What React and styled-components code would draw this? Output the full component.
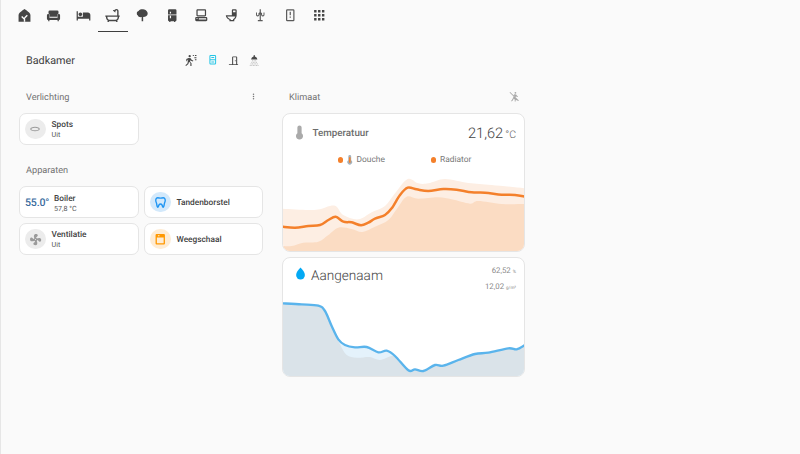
import React from 'react';
import styled, { createGlobalStyle } from 'styled-components';

const GlobalStyle = createGlobalStyle`
  html, body {
    margin: 0;
    height: 100%;
    background: #fafafa;
    overflow: hidden;
  }
  * { box-sizing: border-box; }
`;

const Page = styled.div`
  width: 800px;
  height: 454px;
  background: #fafafa;
  border-left: 1px solid #e6e6e6;
  font-family: Roboto, 'Liberation Sans', sans-serif;
  text-rendering: geometricPrecision;
  color: #3c3c3c;
  overflow: hidden;
`;

const TabBar = styled.nav`
  display: flex;
  height: 32px;
  padding-left: 8.5px;
`;

const Tab = styled.div`
  width: 29.5px;
  height: 32px;
  display: flex;
  align-items: center;
  justify-content: center;
  border-bottom: 1px solid ${(p) => (p.$active ? '#3f3f3f' : 'transparent')};
`;

const Icon = styled.svg`
  width: ${(p) => p.$size || 14}px;
  height: ${(p) => p.$size || 14}px;
  fill: ${(p) => p.$color || '#454545'};
  flex: none;
  display: block;
`;

const ViewHeader = styled.header`
  display: flex;
  align-items: center;
  height: 20px;
  margin-top: 18px;
  padding-left: 25px;
`;

const ViewTitle = styled.h1`
  width: 155px;
  margin: 0;
  font-size: 10.8px;
  font-weight: 400;
  color: #404040;
`;

const Badge = styled.div`
  width: 21px;
  display: flex;
  justify-content: center;
`;

const Columns = styled.div`
  display: grid;
  grid-template-columns: 244px 243px;
  column-gap: 19px;
  padding-left: 18px;
  margin-top: 16px;
`;

const Column = styled.section`
  display: flex;
  flex-direction: column;
`;

const SectionHead = styled.div`
  display: flex;
  align-items: center;
  justify-content: space-between;
  height: 20px;
  padding: 0 5px 0 7px;
  margin-top: ${(p) => p.$top || 0}px;
  margin-bottom: ${(p) => p.$bottom || 7}px;
`;

const SectionTitle = styled.h2`
  margin: 0;
  padding-top: 2px;
  font-size: 9.2px;
  font-weight: 400;
  color: #727272;
`;

const TileGrid = styled.div`
  display: grid;
  grid-template-columns: 120px 119px;
  gap: 5px;
`;

const Tile = styled.div`
  height: 32px;
  display: flex;
  align-items: center;
  gap: 6px;
  padding-left: 5px;
  background: #fff;
  border: 1px solid #e5e5e5;
  border-radius: 7px;
`;

const IconCircle = styled.div`
  width: 20.5px;
  height: 20.5px;
  border-radius: 50%;
  display: flex;
  align-items: center;
  justify-content: center;
  background: ${(p) => p.$bg || '#ececec'};
  flex: none;
`;

const TileText = styled.div`
  display: flex;
  flex-direction: column;
  gap: 1.5px;
  padding-top: ${(p) => p.$shift || 0}px;
`;

const TileName = styled.div`
  padding-top: 1px;
  font-size: 8.3px;
  line-height: 10px;
  font-weight: 500;
  color: #3f3f3f;
`;

const TileState = styled.div`
  font-size: 7.2px;
  line-height: 8.5px;
  color: #555;
`;

const BoilerValue = styled.div`
  font-size: 10.6px;
  font-weight: 500;
  letter-spacing: -0.2px;
  color: #3b6c9e;
  width: 23px;
`;

const ChartCard = styled.article`
  height: ${(p) => p.$height}px;
  margin-bottom: 5px;
  background: #fff;
  border: 1px solid #e5e5e5;
  border-radius: 8px;
  overflow: hidden;
  display: flex;
  flex-direction: column;
`;

const CardHead = styled.div`
  display: flex;
  align-items: ${(p) => p.$align || 'center'};
  padding: ${(p) => p.$padding};
  height: ${(p) => p.$height}px;
  flex: none;
`;

const CardName = styled.div`
  flex: 1;
  margin-left: 4.5px;
  padding-top: 2px;
  font-size: 9.8px;
  font-weight: 500;
  color: #6d6d6d;
`;

const BigValue = styled.div`
  font-size: 14.6px;
  font-weight: 300;
  color: #444;
`;

const BigUnit = styled.span`
  font-size: 10.5px;
  margin-left: 2px;
  color: #666;
`;

const Legend = styled.div`
  display: flex;
  align-items: center;
  height: 12px;
  margin-top: 3px;
  padding-left: 54.5px;
  font-size: 8.4px;
  color: #777;
`;

const LegendItem = styled.div`
  display: flex;
  align-items: center;
  gap: ${(p) => p.$gap}px;
  width: ${(p) => p.$width}px;
`;

const Dot = styled.span`
  width: 5.5px;
  height: 5.5px;
  border-radius: 50%;
  background: #f4802b;
`;

const Chart = styled.svg`
  display: block;
  width: 243px;
  height: ${(p) => p.$height}px;
  margin-top: auto;
  margin-bottom: -1px;
  margin-left: -1px;
  flex: none;
`;

const ComfortName = styled.div`
  flex: 1;
  margin-left: 3px;
  padding-top: 1px;
  font-size: 13.6px;
  font-weight: 300;
  line-height: 18px;
  color: #444;
`;

const Readings = styled.div`
  display: flex;
  flex-direction: column;
  align-items: flex-end;
  gap: 5px;
`;

const Reading = styled.div`
  font-size: 7.8px;
  line-height: 9px;
  color: #888;
`;

const ReadingUnit = styled.span`
  font-size: 4.5px;
  margin-left: 2px;
`;

const paths = {
  sofa: 'M6 4h12a2 2 0 0 1 2 2v2.6a3.2 3.2 0 0 0-2 3V14H6v-2.400a3.200 3.200 0 0 0-2-3V6a2 2 0 0 1 2-2M3.500 9.500a2 2 0 0 1 2 2V15.500h13V11.500a2 2 0 1 1 4 0V17a2 2 0 0 1-2 2v2h-2v-2H5.500v2h-2v-2a2 2 0 0 1-2-2v-5.500a2 2 0 0 1 2-2Z',
  bed: 'M19 7H11V14H3V5H1V20H3V17H21V20H23V11C23 8.790 21.210 7 19 7M7 13C8.660 13 10 11.660 10 10C10 8.340 8.660 7 7 7C5.340 7 4 8.340 4 10C4 11.660 5.340 13 7 13Z',
  bath: 'M19.500 12V4.800C19.500 4.100 19 3.700 18.400 3.700C18 3.700 17.800 3.800 17.500 4.100L16.600 5C16.900 5.700 16.800 6.500 16.300 7.200L12.600 3.800C13.300 3.200 14.200 3.100 14.900 3.400L15.900 2.500C16.500 1.900 17.300 1.500 18.300 1.500C20.200 1.500 21.700 3 21.700 4.800V12H23.500V14H22.500C22.500 17 21.500 19 19.500 20L20.200 22.500H18L17.500 21H6.500L6 22.500H3.800L4.500 20C2.500 19 1.500 17 1.500 14H.5V12H19.500M3.800 14C3.800 17 5 18.800 7 18.800H17C19 18.800 20.200 17 20.200 14H3.800Z',
  tree: 'M11 15C8 15.500 5 14.500 4.500 12C3.300 11 3 10 3 8.500C3 6.500 4.500 5.500 6 5C6.800 3 9 2 12 2C16 2 21 4.500 21 9C21 12.500 18 15 13.500 15V22H11V15Z',
  fridge: 'M7 2H17A2 2 0 0 1 19 4V20A2 2 0 0 1 17 22V23H15V22H9V23H7V22A2 2 0 0 1 5 20V4A2 2 0 0 1 7 2M8 6V9H10V6H8M8 13V17H10V13H8M5 10.800V11.800H19V10.800H5Z',
  desktop: 'M6 2C4.890 2 4 2.890 4 4V12C4 13.110 4.890 14 6 14H18C19.110 14 20 13.110 20 12V4C20 2.890 19.110 2 18 2H6M6 4H18V12H6V4M4 15C2.890 15 2 15.890 2 17V20C2 21.110 2.890 22 4 22H20C21.110 22 22 21.110 22 20V17C22 15.890 21.110 15 20 15H4M8 17H20V18H8V17M8 19H20V20H8V19M4 17H6V18H4V17Z',
  toilet: 'M9 22H17V19.500C19.410 17.870 21 15.120 21 12V4A2 2 0 0 0 19 2H15C13.890 2 13 2.890 13 4V12H3C3 15.090 5 18 9 19.500V22M5.290 14H18.710C18.140 15.910 16.770 17.500 15 18.330V20H11V18.330C8.400 17.500 6 16 5.290 14M15 4H19V7H15V4Z',
  rack: 'M11 2h2v5l2 1.500V11a1.200 1.200 0 0 0 2.400 0V7.500h1.600V11a2.800 2.800 0 0 1-5.600.300L13 10.500V20h3v2H8v-2h3v-9.500l-.4.800A2.800 2.800 0 0 1 5 11V7.500h1.600V11A1.200 1.200 0 0 0 9 11V8.500L11 7V2Z',
  panel: 'M7 2h10a2 2 0 0 1 2 2v16a2 2 0 0 1-2 2H7a2 2 0 0 1-2-2V4a2 2 0 0 1 2-2m0 2v16h10V4H7m4 2h2v6h-2V6m0 8h2v2h-2v-2Z',
  grid: 'M3.500 3.500h4v4h-4zM10 3.500h4v4h-4zM16.500 3.500h4v4h-4zM3.500 10h4v4h-4zM10 10h4v4h-4zM16.500 10h4v4h-4zM3.500 16.500h4v4h-4zM10 16.500h4v4h-4zM16.500 16.500h4v4h-4z',
  motion: 'M9 2a2.200 2.200 0 1 1 0 4.400A2.200 2.200 0 0 1 9 2M7 7.500l4 .500 2 3.500 3 1.200-.7 1.800-3.800-1.500-.9-1.300-.8 3 2.700 3V23h-2.200v-5.500L7.700 15l-1.200 4L2 23l-1.300-1.600 3.900-3.400 1.700-7.500-1.800.8V14H2.500V9.700L7 7.500M15 2h2v2h-2V2m4 0h3v2h-3V2m-1 4h4v2h-4V6m1 4h3v2h-3v-2Z',
  heater: 'M7.500 2h9A2.500 2.500 0 0 1 19 4.500v15a2.500 2.500 0 0 1-2.500 2.500h-9A2.500 2.500 0 0 1 5 19.500v-15A2.500 2.500 0 0 1 7.500 2m0 2.200a.400.400 0 0 0-.4.400V11h9.800V4.600a.400.400 0 0 0-.4-.4H7.500M7.100 13v6.400c0 .2.200.400.4.400h9c.2 0 .4-.2.400-.4V13H7.100M9 6.500h6v2H9v-2m0 9h6v2H9v-2Z',
  door: 'M2 20h7V5a2 2 0 0 1 2-2h7a2 2 0 0 1 2 2v15h2v2H2v-2m9.200-15v15h6.600V5h-6.600m3.800 6.500h1.700v2H15v-2Z',
  shower: 'M12 2a1.300 1.300 0 0 1 1.300 1.300v1.500C15.800 5.500 17.500 7.800 18 10.500H6C6.500 7.800 8.200 5.500 10.700 4.800V3.300A1.300 1.300 0 0 1 12 2Z',
  motionOff: 'M2.500 2 1.200 3.300 10 12l-1 2.500-3 5.500-1.500 1.500L6 23l2.500-3 2-3.500 2 2V23h2v-4l5.800 2.800 1.300-1.300L2.500 2M14 2a2 2 0 1 1 0 4 2 2 0 0 1 0-4m-2 5 3.500.500 2 3 2 1-.6 1.800-3-1.200-1.800 1.200L10 8.500 12 7Z',
  spot: 'M12 7.500c5.500 0 9.500 2 9.500 4.500s-4 4.500-9.500 4.500-9.500-2-9.500-4.500 4-4.500 9.500-4.500m0 1.800c-4.500 0-7.500 1.500-7.500 2.700s3 2.700 7.500 2.700 7.500-1.500 7.500-2.700-3-2.700-7.500-2.700Z',
  fan: 'M12 11a1 1 0 1 0 0 2 1 1 0 0 0 0-2m.5-9c4.500 0 4.600 3.600 2.200 4.800-1 .5-1.400 1.300-1.600 2 .6.300 1.100.700 1.500 1.300 3.700-2 7.900-1.200 7.900 2.400 0 4.500-3.700 4.600-4.900 2.200-.5-1-1.300-1.400-2-1.600-.3.600-.7 1.100-1.300 1.500 2 3.700 1.200 7.900-2.400 7.900-4.500 0-4.600-3.700-2.200-4.900 1-.5 1.400-1.300 1.600-2-.6-.3-1.100-.7-1.500-1.300-3.700 2-7.900 1.200-7.900-2.400 0-4.500 3.700-4.600 4.900-2.200.5 1 1.300 1.400 2 1.600.3-.6.700-1.100 1.300-1.500C8.100 6.600 8.900 2 12.500 2Z',
  tooth: 'M7 2c1.800 0 3 .8 5 .8S15.200 2 17 2c3 0 5 2.500 5 6 0 2.500-1 3.800-1.500 6-.5 2.500-.8 8-3.500 8-2.800 0-2.300-6-5-6s-2.200 6-5 6c-2.700 0-3-5.500-3.500-8C3 11.800 2 10.500 2 8c0-3.500 2-6 5-6m0 2.500C5.500 4.500 4.500 6 4.500 8c0 2 .9 3.200 1.500 5.600.3 1.300.5 3.500 1 5 .8-2 1.500-5.100 5-5.100s4.200 3.100 5 5.100c.5-1.500.7-3.700 1-5 .6-2.400 1.500-3.600 1.500-5.600 0-2-1-3.500-2.500-3.500-1.400 0-2.800.8-5 .8S8.400 4.500 7 4.500Z',
  scale: 'M5 2h14a2 2 0 0 1 2 2v16a2 2 0 0 1-2 2H5a2 2 0 0 1-2-2V4a2 2 0 0 1 2-2m.5 6.500V19.500h13V8.500h-13M7.500 4.500v1.500h3V4.500h-3Z',
  thermo: 'M15 13V5a3 3 0 0 0-6 0v8a5 5 0 1 0 6 0Z',
  drop: 'M12 2.500c4 4.500 7 8 7 12a7 7 0 0 1-14 0c0-4 3-7.500 7-12Z',
  dots: 'M12 16a2 2 0 1 1 0 4 2 2 0 0 1 0-4m0-6a2 2 0 1 1 0 4 2 2 0 0 1 0-4m0-6a2 2 0 1 1 0 4 2 2 0 0 1 0-4Z',
};

const Glyph = ({ name, size, color }) => (
  <Icon viewBox="0 0 24 24" $size={size} $color={color} fillRule="evenodd">
    <path d={paths[name]} />
  </Icon>
);

const HomeLeaf = () => (
  <Icon viewBox="0 0 24 24" $size={15}>
    <path d="M12 1.500 15 3.500C18 6 21.500 8.500 21.500 11V22H2.500V11C2.500 8.500 6 6 9 3.500L12 1.500Z" />
    <path d="M12 22V16M12 18 7.500 13.500M12 16 16.500 11.500" fill="none" stroke="#fafafa" strokeWidth="2.200" />
  </Icon>
);

const ShowerBadge = () => (
  <Icon viewBox="0 0 24 24" $size={12.500}>
    <path d={paths.shower} fill="#4a4a4a" />
    <path d="M8 13h8M6.500 16h11M5 19h14M3.500 22h17" fill="none" stroke="#a9a9a9" strokeWidth="1.600" strokeDasharray="1.600 1.400" />
  </Icon>
);

const LegendThermo = () => (
  <Icon viewBox="0 0 24 24" $size={11.500}>
    <path d={paths.thermo} fill="#a4b2bd" />
    <path d="M12 7v11" stroke="#f4802b" strokeWidth="3.500" fill="none" />
  </Icon>
);

const smooth = (pts) => {
  let d = `M${pts[0][0]} ${pts[0][1]}`;
  for (let i = 0; i < pts.length - 1; i++) {
    const p0 = pts[i - 1] || pts[i];
    const p1 = pts[i];
    const p2 = pts[i + 1];
    const p3 = pts[i + 2] || p2;
    const c1x = p1[0] + (p2[0] - p0[0]) / 6;
    const c1y = p1[1] + (p2[1] - p0[1]) / 6;
    const c2x = p2[0] - (p3[0] - p1[0]) / 6;
    const c2y = p2[1] - (p3[1] - p1[1]) / 6;
    d += ` C${c1x} ${c1y} ${c2x} ${c2y} ${p2[0]} ${p2[1]}`;
  }
  return d;
};

const area = (pts, bottom) =>
  `${smooth(pts)} L${pts[pts.length - 1][0]} ${bottom} L${pts[0][0]} ${bottom} Z`;

const tempLine = [[21, 440], [60, 443], [100, 438], [135, 435], [160, 420], [182, 410], [205, 425], [230, 427], [258, 436], [280, 428], [300, 416], [330, 405], [350, 385], [375, 345], [398, 323], [425, 328], [460, 333], [505, 327], [545, 329], [590, 337], [630, 338], [680, 344], [720, 345], [750, 350]];
const tempHigh = [[21, 386], [100, 390], [135, 388], [165, 378], [185, 380], [205, 405], [250, 418], [290, 397], [330, 378], [360, 340], [398, 297], [430, 310], [460, 310], [510, 297], [580, 309], [650, 315], [750, 325]];
const tempLow = [[21, 498], [50, 498], [85, 488], [130, 485], [160, 465], [190, 443], [230, 447], [262, 456], [300, 440], [340, 420], [370, 380], [395, 350], [430, 356], [490, 352], [530, 358], [585, 371], [610, 363], [680, 372], [750, 372]];

const humLine = [[21, 157], [80, 160], [130, 164], [150, 180], [170, 225], [190, 265], [210, 282], [240, 289], [275, 288], [310, 304], [335, 299], [360, 315], [400, 358], [420, 355], [445, 360], [480, 342], [505, 344], [550, 327], [600, 309], [640, 305], [700, 292], [725, 295], [750, 282]];
const humLow = [[21, 157], [80, 160], [130, 164], [150, 180], [170, 225], [195, 280], [215, 312], [245, 320], [285, 318], [315, 327], [350, 315], [365, 322], [400, 358], [420, 355], [445, 360], [480, 342], [505, 344], [550, 327], [600, 309], [640, 305], [700, 292], [725, 295], [750, 282]];

const tabs = ['sofa', 'bed', 'bath', 'tree', 'fridge', 'desktop', 'toilet', 'rack', 'panel', 'grid'];

export default function App() {
  return (
    <Page>
      <GlobalStyle />
      <TabBar>
        <Tab><HomeLeaf /></Tab>
        {tabs.map((t) => (
          <Tab key={t} $active={t === 'bath'}>
            <Glyph name={t} size={t === 'bed' || t === 'sofa' || t === 'bath' ? 15 : 14.500} color={t === 'rack' || t === 'panel' ? '#5a5a5a' : undefined} />
          </Tab>
        ))}
      </TabBar>

      <ViewHeader>
        <ViewTitle>Badkamer</ViewTitle>
        <Badge><Glyph name="motion" size={12.500} /></Badge>
        <Badge><Glyph name="heater" size={11.500} color="#26c6e6" /></Badge>
        <Badge><Glyph name="door" size={11} /></Badge>
        <Badge><ShowerBadge /></Badge>
      </ViewHeader>

      <Columns>
        <Column>
          <SectionHead>
            <SectionTitle>Verlichting</SectionTitle>
            <Glyph name="dots" size={9} color="#777" />
          </SectionHead>
          <TileGrid>
            <Tile>
              <IconCircle><Glyph name="spot" size={12} color="#9a9a9a" /></IconCircle>
              <TileText>
                <TileName>Spots</TileName>
                <TileState>Uit</TileState>
              </TileText>
            </Tile>
          </TileGrid>

          <SectionHead $top={14} $bottom={7}>
            <SectionTitle>Apparaten</SectionTitle>
          </SectionHead>
          <TileGrid>
            <Tile>
              <BoilerValue>55.0°</BoilerValue>
              <TileText $shift={2}>
                <TileName>Boiler</TileName>
                <TileState>57,8 °C</TileState>
              </TileText>
            </Tile>
            <Tile>
              <IconCircle $bg="#d3e9fb"><Glyph name="tooth" size={13} color="#2196f3" /></IconCircle>
              <TileName>Tandenborstel</TileName>
            </Tile>
            <Tile>
              <IconCircle><Glyph name="fan" size={13} color="#9a9a9a" /></IconCircle>
              <TileText>
                <TileName>Ventilatie</TileName>
                <TileState>Uit</TileState>
              </TileText>
            </Tile>
            <Tile>
              <IconCircle $bg="#feecd4"><Glyph name="scale" size={12.500} color="#ff9800" /></IconCircle>
              <TileName>Weegschaal</TileName>
            </Tile>
          </TileGrid>
        </Column>

        <Column>
          <SectionHead>
            <SectionTitle>Klimaat</SectionTitle>
            <Glyph name="motionOff" size={11} color="#a8a8a8" />
          </SectionHead>

          <ChartCard $height={139}>
            <CardHead $padding="0 8px 0 8px" $height={37}>
              <Glyph name="thermo" size={17} color="#aaa" />
              <CardName>Temperatuur</CardName>
              <BigValue>21,62<BigUnit>°C</BigUnit></BigValue>
            </CardHead>
            <Legend>
              <LegendItem $width={93} $gap={1}>
                <Dot />
                <LegendThermo />
                Douche
              </LegendItem>
              <LegendItem $width={60} $gap={4}>
                <Dot />
                Radiator
              </LegendItem>
            </Legend>
            <Chart viewBox="21 270 729 245" $height={81.700} preserveAspectRatio="none">
              <path d={area(tempHigh, 515)} fill="#fdeee3" />
              <path d={area(tempLow, 515)} fill="#fbdcc3" />
              <path d={smooth(tempLine)} fill="none" stroke="#f4802b" strokeWidth="7.500" />
            </Chart>
          </ChartCard>

          <ChartCard $height={119.500}>
            <CardHead $padding="8px 8px 0 10px" $height={38} $align="flex-start">
              <Glyph name="drop" size={15} color="#03a9f4" />
              <ComfortName>Aangenaam</ComfortName>
              <Readings>
                <Reading>62,52<ReadingUnit>%</ReadingUnit></Reading>
                <Reading>12,02<ReadingUnit>g/m³</ReadingUnit></Reading>
              </Readings>
            </CardHead>
            <Chart viewBox="21 150 729 228" $height={76} preserveAspectRatio="none">
              <path d={area(humLine, 378)} fill="#e4f2fb" />
              <path d={area(humLow, 378)} fill="#dae3e9" />
              <path d={smooth(humLine)} fill="none" stroke="#5ab4ec" strokeWidth="7" />
            </Chart>
          </ChartCard>
        </Column>
      </Columns>
    </Page>
  );
}
